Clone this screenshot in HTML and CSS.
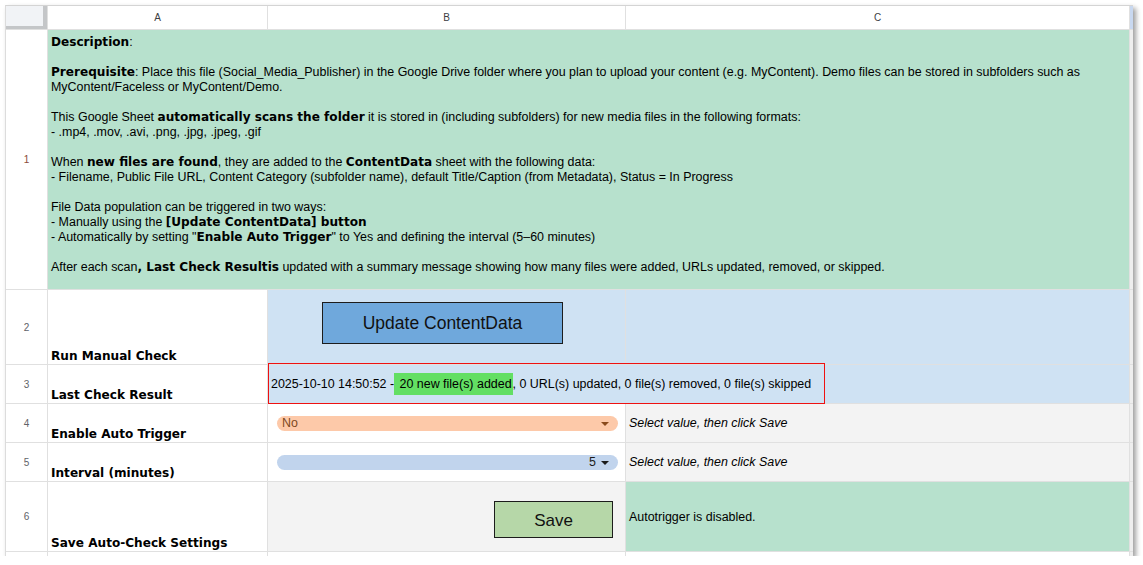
FILE: index.html
```html
<!DOCTYPE html>
<html lang="en">
<head>
<meta charset="utf-8">
<title>Social Media Publisher - Settings</title>
<link rel="stylesheet" href="styles.css">
</head>
<body>
<div class="sheet">
  <div class="corner"></div>
  <div class="colhead">A</div>
  <div class="colhead">B</div>
  <div class="colhead">C</div>
  <div class="strip strip-head"></div>

  <div class="rowhead rowhead-1">1</div>
  <div class="cell desc">
    <b>Description</b>:<br>
    <br>
    <b>Prerequisite</b>: Place this file (Social_Media_Publisher) in the Google Drive folder where you plan to upload your content (e.g. MyContent). Demo files can be stored in subfolders such as<br>
    MyContent/Faceless or MyContent/Demo.<br>
    <br>
    This Google Sheet <b>automatically scans the folder</b> it is stored in (including subfolders) for new media files in the following formats:<br>
    - .mp4, .mov, .avi, .png, .jpg, .jpeg, .gif<br>
    <br>
    When <b>new files are found</b>, they are added to the <b>ContentData</b> sheet with the following data:<br>
    - Filename, Public File URL, Content Category (subfolder name), default Title/Caption (from Metadata), Status = In Progress<br>
    <br>
    File Data population can be triggered in two ways:<br>
    - Manually using the <b>[Update ContentData] button</b><br>
    - Automatically by setting "<b>Enable Auto Trigger</b>" to Yes and defining the interval (5–60 minutes)<br>
    <br>
    After each scan<b>, Last Check Resultis</b> updated with a summary message showing how many files were added, URLs updated, removed, or skipped.
  </div>
  <div class="strip"></div>

  <div class="rowhead">2</div>
  <div class="cell label">Run Manual Check</div>
  <div class="cell blue btn-cell-update"><div class="btn btn-update">Update ContentData</div></div>
  <div class="cell blue"></div>
  <div class="strip"></div>

  <div class="rowhead">3</div>
  <div class="cell label">Last Check Result</div>
  <div class="cell blue result">
    <span class="result-text">2025-10-10 14:50:52 -<span class="hl"> 20 new file(s) added</span>, 0 URL(s) updated, 0 file(s) removed, 0 file(s) skipped</span>
    <div class="redbox"></div>
  </div>
  <div class="strip"></div>

  <div class="rowhead">4</div>
  <div class="cell label">Enable Auto Trigger</div>
  <div class="cell pill-cell">
    <div class="pill pill-no"><span class="pill-val">No</span><span class="caret caret-brown"></span></div>
  </div>
  <div class="cell grey note">Select value, then click Save</div>
  <div class="strip"></div>

  <div class="rowhead">5</div>
  <div class="cell label">Interval (minutes)</div>
  <div class="cell pill-cell">
    <div class="pill pill-num"><span class="pill-val">5</span><span class="caret"></span></div>
  </div>
  <div class="cell grey note">Select value, then click Save</div>
  <div class="strip"></div>

  <div class="rowhead">6</div>
  <div class="cell label">Save Auto-Check Settings</div>
  <div class="cell grey btn-cell-save"><div class="btn btn-save">Save</div></div>
  <div class="cell mint status">Autotrigger is disabled.</div>
  <div class="strip"></div>

  <div class="rowhead"></div>
  <div class="cell"></div>
  <div class="cell"></div>
  <div class="cell"></div>
  <div class="strip"></div>
</div>
</body>
</html>
```

FILE: styles.css
```css
html, body {
  margin: 0;
  padding: 0;
  background: #ffffff;
}

body {
  font-family: "Liberation Sans", Arial, sans-serif;
  font-size: 12.45px;
  color: #000;
}

.sheet {
  display: grid;
  grid-template-columns: 41px 219px 357px 503px 3px;
  grid-template-rows: 23px 259px 74px 38px 38px 38px 69px 4px;
  gap: 1px;
  width: fit-content;
  margin: 5px 0 0 5px;
  background: #e0e0e0;
  border-top: 1px solid #d4d4d4;
  border-left: 1px solid #dcdcdc;
  box-shadow: 3px 3px 5px rgba(0, 0, 0, 0.38);
}

.corner {
  background: #f1f3f6;
  box-sizing: border-box;
  border-right: 4px solid #c4c6c8;
  border-bottom: 3px solid #c4c6c8;
}

.colhead {
  background: #ffffff;
  display: flex;
  align-items: center;
  justify-content: center;
  font-size: 10px;
  color: #3c4043;
}

.strip {
  background: #eeeeee;
}

.strip-head {
  background: #c8d8f0;
}

.rowhead {
  background: #ffffff;
  display: flex;
  align-items: center;
  justify-content: center;
  font-size: 10px;
  color: #5f6368;
}

.rowhead-1 {
  color: #8a4b3a;
}

.cell {
  background: #ffffff;
  padding: 0 3px;
  display: flex;
  align-items: center;
  min-width: 0;
}

.desc {
  grid-column: 2 / span 3;
  background: #b7e1cd;
  display: block;
  padding: 5px 3px 0;
  line-height: 15px;
  white-space: nowrap;
}

.desc b,
.label {
  font-family: "DejaVu Sans", Verdana, sans-serif;
  font-weight: bold;
  font-size: 12.1px;
}

.label {
  align-items: flex-end;
  padding-bottom: 1px;
  line-height: 14px;
  white-space: nowrap;
}

.blue {
  background: #cfe2f3;
}

.grey {
  background: #f3f3f3;
}

.mint {
  background: #b7e1cd;
}

.btn {
  box-sizing: border-box;
  display: flex;
  align-items: center;
  justify-content: center;
  border: 1px solid #1c1c1c;
  color: #111;
  font-size: 17px;
}

.btn-cell-update {
  align-items: flex-start;
  padding: 12px 0 0 54px;
}

.btn-update {
  width: 241px;
  height: 42px;
  background: #6fa8dc;
  font-size: 17.5px;
}

.btn-cell-save {
  align-items: flex-start;
  justify-content: flex-end;
  padding: 19px 12px 0 0;
}

.btn-save {
  width: 119px;
  height: 37px;
  background: #b6d7a8;
  padding-top: 2px;
}

.result {
  grid-column: 3 / span 2;
  position: relative;
  white-space: nowrap;
  overflow: visible;
  padding-left: 3px;
}

.hl {
  background: #63df63;
  padding: 4px 1px 4px 2px;
}

.redbox {
  position: absolute;
  left: 0;
  top: -2px;
  width: 555px;
  height: 39px;
  border: 1px solid #ee1111;
  pointer-events: none;
}

.pill-cell {
  padding: 0 7px 0 9px;
}

.pill {
  flex: 1;
  height: 15px;
  border-radius: 8px;
  display: flex;
  align-items: center;
  padding: 0 9px 0 5px;
  font-size: 12.45px;
}

.pill-no {
  background: #fdc9a9;
  color: #7d4a22;
}

.pill-no .pill-val {
  flex: 1;
}

.pill-num {
  background: #c1d4ed;
  color: #1b1b1b;
  justify-content: flex-end;
}

.pill-num .pill-val {
  margin-right: 5px;
}

.caret {
  width: 0;
  height: 0;
  border-left: 4px solid transparent;
  border-right: 4px solid transparent;
  border-top: 4px solid #1b1b1b;
  margin-top: 1px;
}

.caret-brown {
  border-top-color: #8a4a1c;
}

.note {
  font-style: italic;
  white-space: nowrap;
}

.status {
  white-space: nowrap;
}
```
